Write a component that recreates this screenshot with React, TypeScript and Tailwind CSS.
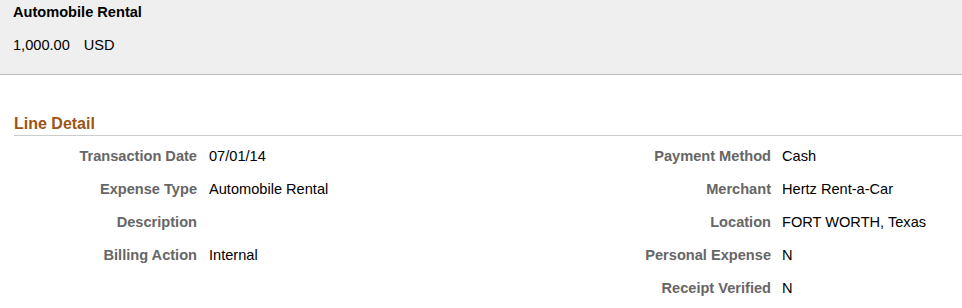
// Expense line detail (read-only view).
type Field = { label: string; value: string };

const left: Field[] = [
  { label: "Transaction Date", value: "07/01/14" },
  { label: "Expense Type", value: "Automobile Rental" },
  { label: "Description", value: "" },
  { label: "Billing Action", value: "Internal" },
];

const right: Field[] = [
  { label: "Payment Method", value: "Cash" },
  { label: "Merchant", value: "Hertz Rent-a-Car" },
  { label: "Location", value: "FORT WORTH, Texas" },
  { label: "Personal Expense", value: "N" },
  { label: "Receipt Verified", value: "N" },
];

function Rows({ fields, cols }: { fields: Field[]; cols: string }) {
  return (
    <div className={`grid ${cols} auto-rows-[33px] items-center`}>
      {fields.map((f) => (
        <div key={f.label} className="contents">
          <span className="text-right font-bold text-[#666666]">{f.label}</span>
          <span className="text-black">{f.value}</span>
        </div>
      ))}
    </div>
  );
}

export default function App() {
  return (
    <div
      className="h-[308px] w-[962px] overflow-hidden bg-white text-[14.6px]"
      style={{ fontFamily: '"Liberation Sans", Arial, sans-serif' }}
    >
      <div className="h-[75px] border-b border-[#bcbcbc] bg-[#efefef] px-[13px] pt-[2px]">
        <div className="font-bold leading-[20px] text-black">Automobile Rental</div>
        <div className="mt-[13px] flex gap-[14px] leading-[20px] text-black">
          <span>1,000.00</span>
          <span>USD</span>
        </div>
      </div>

      <div className="ml-[14px] mt-[39px] border-b border-[#cccccc] pb-[1px]">
        <h2 className="text-[16px] font-bold leading-[20px] text-[#9c5414]">Line Detail</h2>
      </div>

      <div className="flex pt-[4px]">
        <div className="w-[481px]">
          <Rows fields={left} cols="grid-cols-[197px_1fr] gap-x-3" />
        </div>
        <div className="flex-1">
          <Rows fields={right} cols="grid-cols-[290px_1fr] gap-x-[11px]" />
        </div>
      </div>
    </div>
  );
}
